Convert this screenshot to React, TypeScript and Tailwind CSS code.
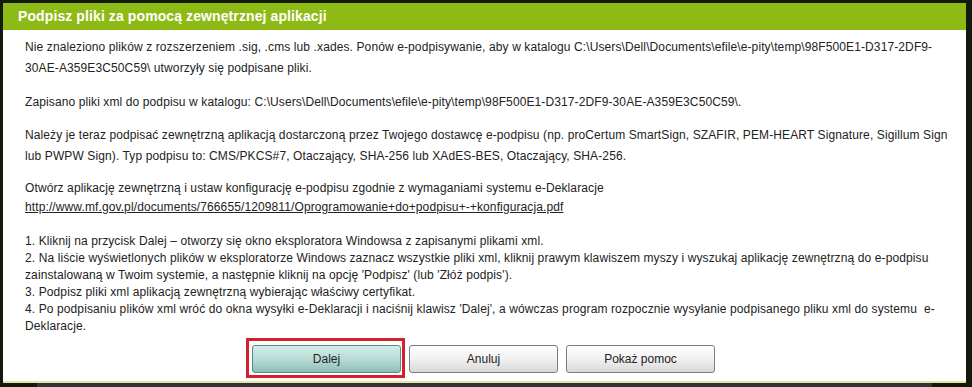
import React from "react";

const font = { fontFamily: '"Liberation Sans", Arial, sans-serif' };

const Btn = ({ label, primary }: { label: string; primary?: boolean }) => (
  <button
    className={`w-[149px] h-[28px] rounded-[3px] border text-[12px] text-[#222] ${
      primary
        ? "border-[#5f8784] bg-gradient-to-b from-[#d3ede8] via-[#b9dcd7] to-[#8fbdb9]"
        : "border-[#7c7c7c] bg-gradient-to-b from-white via-[#f1f1f1] to-[#d9d9d9]"
    }`}
  >
    {label}
  </button>
);

export default function App() {
  return (
    <div className="w-[972px] h-[387px] bg-[#141a0b] pt-[3px] overflow-hidden" style={font}>
      <div className="ml-[3px] w-[963px] h-[380px] bg-white border-b-2 border-[#dfe6a8] flex flex-col">
        <div className="h-[27px] bg-[#8dba14] flex items-center pl-[15px] text-white font-bold text-[14px] tracking-[0.1px]">
          Podpisz pliki za pomocą zewnętrznej aplikacji
        </div>
        <div className="pl-[22px] pt-[7px] text-[12px] text-[#222] whitespace-nowrap tracking-[0.11px]">
          <p className="leading-[21px] mb-[13px]">
            Nie znaleziono plików z rozszerzeniem .sig, .cms lub .xades. Ponów e-podpisywanie, aby w katalogu C:\Users\Dell\Documents\efile\e-pity\temp\98F500E1-D317-2DF9-
            <br />
            30AE-A359E3C50C59\ utworzyły się podpisane pliki.
          </p>
          <p className="leading-[21px] mb-3">
            Zapisano pliki xml do podpisu w katalogu: C:\Users\Dell\Documents\efile\e-pity\temp\98F500E1-D317-2DF9-30AE-A359E3C50C59\.
          </p>
          <p className="leading-[21px] mb-3">
            Należy je teraz podpisać zewnętrzną aplikacją dostarczoną przez Twojego dostawcę e-podpisu (np. proCertum SmartSign, SZAFIR, PEM-HEART Signature, Sigillum Sign
            <br />
            lub PWPW Sign). Typ podpisu to: CMS/PKCS#7, Otaczający, SHA-256 lub XAdES-BES, Otaczający, SHA-256.
          </p>
          <p className="leading-[19px] mb-[16px]">
            Otwórz aplikację zewnętrzną i ustaw konfigurację e-podpisu zgodnie z wymaganiami systemu e-Deklaracje
            <br />
            <a className="underline">http://www.mf.gov.pl/documents/766655/1209811/Oprogramowanie+do+podpisu+-+konfiguracja.pdf</a>
          </p>
          <div className="leading-[17px]">
            <div>1. Kliknij na przycisk Dalej – otworzy się okno eksploratora Windowsa z zapisanymi plikami xml.</div>
            <div>
              2. Na liście wyświetlonych plików w eksploratorze Windows zaznacz wszystkie pliki xml, kliknij prawym klawiszem myszy i wyszukaj aplikację zewnętrzną do e-podpisu
            </div>
            <div>zainstalowaną w Twoim systemie, a następnie kliknij na opcję 'Podpisz' (lub 'Złóż podpis').</div>
            <div>3. Podpisz pliki xml aplikacją zewnętrzną wybierając właściwy certyfikat.</div>
            <div>
              4. Po podpisaniu plików xml wróć do okna wysyłki e-Deklaracji i naciśnij klawisz 'Dalej', a wówczas program rozpocznie wysyłanie podpisanego pliku xml do systemu{"\u00a0 "}e-
            </div>
            <div>Deklaracje.</div>
          </div>
        </div>
        <div className="flex justify-center gap-2 mt-[10px] pr-[2px]">
          <div className="relative">
            <Btn label="Dalej" primary />
            <div className="absolute -left-[6px] -top-[7px] -right-[4px] -bottom-[5px] border-[3px] border-[#d4202a] pointer-events-none" />
          </div>
          <Btn label="Anuluj" />
          <Btn label="Pokaż pomoc" />
        </div>
      </div>
      <div className="ml-[37px] w-[895px] h-[4px] bg-[#333]" />
    </div>
  );
}
